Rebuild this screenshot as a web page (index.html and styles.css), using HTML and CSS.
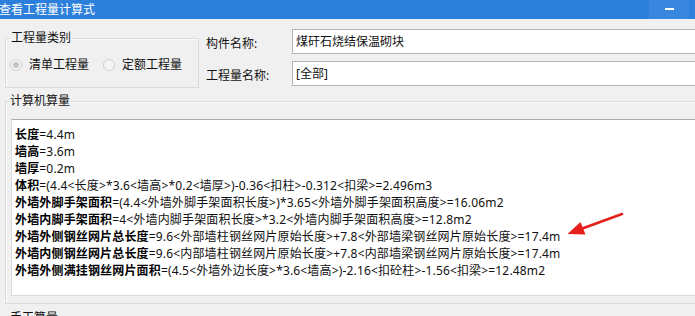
FILE: index.html
```html
<!DOCTYPE html>
<html lang="zh-CN">
<head>
<meta charset="utf-8">
<title>查看工程量计算式</title>
<link rel="stylesheet" href="styles.css">
</head>
<body>
<div class="window">
  <div class="titlebar">
    <span class="title">查看工程量计算式</span>
    <span class="min-btn"><span class="min-dash"></span></span>
  </div>
  <div class="top">
    <fieldset class="group group-type">
      <legend>工程量类别</legend>
      <div class="radios">
        <span class="radio checked"></span><span class="radio-label">清单工程量</span>
        <span class="radio second"></span><span class="radio-label">定额工程量</span>
      </div>
    </fieldset>
    <div class="fields">
      <div class="field-row">
        <span class="field-label">构件名称:</span>
        <div class="input">煤矸石烧结保温砌块</div>
      </div>
      <div class="field-row">
        <span class="field-label">工程量名称:</span>
        <div class="input">[全部]</div>
      </div>
    </div>
  </div>
  <fieldset class="group group-calc">
    <legend>计算机算量</legend>
    <div class="textarea">
      <div class="line"><b>长度</b>=4.4m</div>
      <div class="line"><b>墙高</b>=3.6m</div>
      <div class="line"><b>墙厚</b>=0.2m</div>
      <div class="line"><b>体积</b>=(4.4&lt;长度&gt;*3.6&lt;墙高&gt;*0.2&lt;墙厚&gt;)-0.36&lt;扣柱&gt;-0.312&lt;扣梁&gt;=2.496m3</div>
      <div class="line"><b>外墙外脚手架面积</b>=(4.4&lt;外墙外脚手架面积长度&gt;)*3.65&lt;外墙外脚手架面积高度&gt;=16.06m2</div>
      <div class="line"><b>外墙内脚手架面积</b>=4&lt;外墙内脚手架面积长度&gt;*3.2&lt;外墙内脚手架面积高度&gt;=12.8m2</div>
      <div class="line"><b>外墙外侧钢丝网片总长度</b>=9.6&lt;外部墙柱钢丝网片原始长度&gt;+7.8&lt;外部墙梁钢丝网片原始长度&gt;=17.4m</div>
      <div class="line"><b>外墙内侧钢丝网片总长度</b>=9.6&lt;内部墙柱钢丝网片原始长度&gt;+7.8&lt;内部墙梁钢丝网片原始长度&gt;=17.4m</div>
      <div class="line"><b>外墙外侧满挂钢丝网片面积</b>=(4.5&lt;外墙外边长度&gt;*3.6&lt;墙高&gt;)-2.16&lt;扣砼柱&gt;-1.56&lt;扣梁&gt;=12.48m2</div>
    </div>
  </fieldset>
  <fieldset class="group group-manual">
    <legend>手工算量</legend>
  </fieldset>
  <svg class="arrow" width="70" height="36" viewBox="0 0 70 36">
    <line x1="62" y1="6" x2="21" y2="21" stroke="#e5201c" stroke-width="2.6" stroke-linecap="round"/>
    <polygon points="7.5,26 25.5,26.5 20.5,14" fill="#e5201c"/>
  </svg>
</div>
</body>
</html>
```
FILE: styles.css
```css
* { box-sizing: border-box; }
html, body {
  margin: 0;
  padding: 0;
}
body {
  width: 695px;
  height: 316px;
  overflow: hidden;
  background: #f0f0f0;
  font-family: "Noto Sans", "Noto Sans CJK SC", sans-serif;
  font-size: 12px;
  color: #000;
}
.window {
  position: relative;
  width: 695px;
  height: 316px;
  overflow: hidden;
}
.titlebar {
  height: 19px;
  background: #2c7fdb;
  display: flex;
  align-items: center;
  justify-content: space-between;
  color: #fff;
}
.title {
  margin-left: -1px;
  font-size: 12px;
  line-height: 19px;
}
.min-btn {
  width: 40px;
  height: 19px;
  margin-right: 6px;
  display: flex;
  align-items: center;
  justify-content: center;
  background: rgba(255, 255, 255, 0.06);
}
.min-dash {
  width: 9px;
  height: 2px;
  background: #fff;
  margin-top: -1px;
}
.top {
  display: flex;
  padding: 10px 0 0 5px;
  height: 69px;
  width: 1000px;
}
.group {
  margin: 0;
  border: 1px solid #dcdcdc;
  box-shadow: 1px 1px 0 #fafafa inset;
  min-width: 0;
}
.group legend {
  font-size: 12px;
  line-height: 14px;
  padding: 0 1px;
  color: #111;
}
.group-type {
  flex: none;
  margin-top: 2px;
  width: 194px;
  height: 57px;
  padding: 0 0 0 4px;
}
.radios {
  margin-top: 13px;
  height: 14px;
  display: flex;
  align-items: center;
  white-space: nowrap;
}
.radio {
  width: 12px;
  height: 12px;
  border-radius: 50%;
  border: 1px solid #cfcfcf;
  background: #f4f4f4;
  display: flex;
  align-items: center;
  justify-content: center;
  flex: none;
}
.radio.checked::after {
  content: "";
  width: 6px;
  height: 6px;
  border-radius: 50%;
  background: #c4c4c4;
}
.radio.second {
  margin-left: 14px;
}
.radio-label {
  margin-left: 7px;
  color: #111;
  line-height: 14px;
  flex: none;
}
.fields {
  flex: none;
  margin-left: 7px;
  display: flex;
  flex-direction: column;
  gap: 7px;
}
.field-row {
  display: flex;
  align-items: center;
  height: 25px;
}
.field-label {
  width: 86px;
  padding-top: 2px;
  color: #111;
  flex: none;
}
.input {
  flex: none;
  width: 420px;
  height: 25px;
  background: #fff;
  border: 1px solid #b4b4b4;
  padding: 0 3px;
  line-height: 23px;
  color: #111;
}
.group-calc {
  margin: 6px 0 0 5px;
  width: 720px;
  padding: 0 0 7px 5px;
}
.group-calc legend {
  margin-left: -1px;
  padding: 0;
}
.textarea {
  margin-top: 11px;
  height: 177px;
  background: #fff;
  border: 1px solid #dadada;
  border-top-color: #a9a9a9;
  padding: 6px 0 0 3px;
  white-space: nowrap;
  letter-spacing: 0.16px;
}
.line {
  line-height: 17px;
  height: 17px;
  color: #111;
}
.line b {
  font-weight: 700;
  color: #000;
}
.group-manual {
  margin: 7px 0 0 5px;
  width: 720px;
  height: 40px;
  padding: 0 0 0 5px;
}
.group-manual legend {
  margin-left: -1px;
  padding: 0;
}
.arrow {
  position: absolute;
  left: 560px;
  top: 208px;
}
```
